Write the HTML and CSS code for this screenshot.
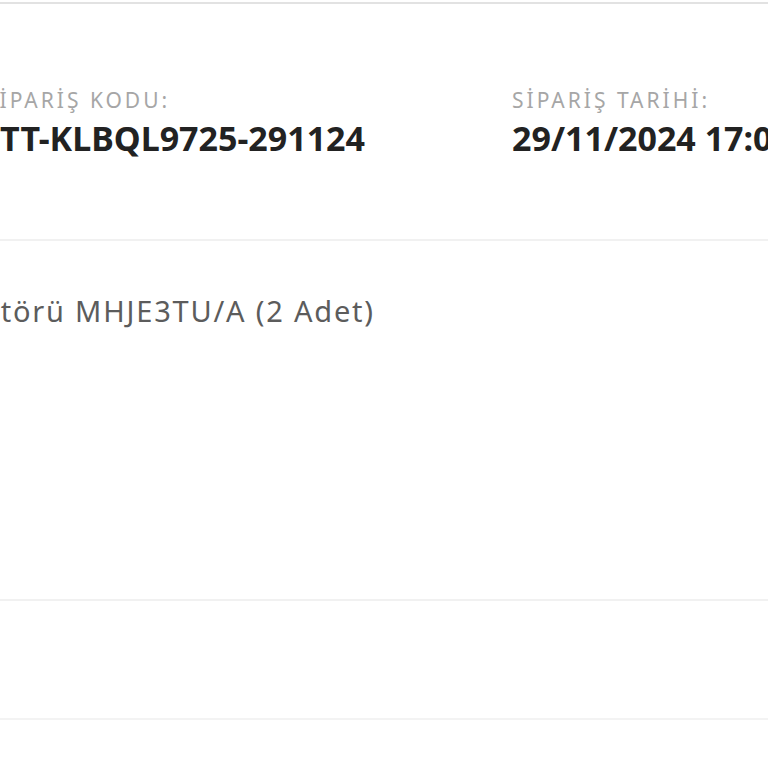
FILE: index.html
```html
<!DOCTYPE html>
<html lang="tr">
<head>
    <meta charset="UTF-8">
    <meta name="viewport" content="width=device-width, initial-scale=1.0">
    <title>Sipariş Detayı</title>
    <link rel="stylesheet" href="styles.css">
</head>
<body>
    <div class="order-card">
        <div class="order-head">
            <div class="info-col">
                <div class="info-label">SİPARİŞ KODU:</div>
                <div class="info-value code">PTT-KLBQL9725-291124</div>
            </div>
            <div class="info-col">
                <div class="info-label">SİPARİŞ TARİHİ:</div>
                <div class="info-value">29/11/2024 17:05</div>
            </div>
        </div>
        <div class="order-items">
            <div class="item-name">Adaptörü MHJE3TU/A (2 Adet)</div>
        </div>
        <div class="order-row"></div>
        <div class="order-row last"></div>
    </div>
</body>
</html>
```

FILE: styles.css
```css
body {
    margin: 0;
    padding: 0;
    background: #ffffff;
    font-family: "Noto Sans", "Open Sans", sans-serif;
    overflow: hidden;
    height: 768px;
}
.order-card {
    margin-top: 2px;
    border-top: 2px solid #e2e2e2;
    overflow: hidden;
}
.order-head {
    display: grid;
    grid-template-columns: 527px 1fr;
    margin-left: -15px;
    height: 237px;
    padding-top: 82px;
    box-sizing: border-box;
    border-bottom: 2px solid #f1f1f1;
}
.info-label {
    font-size: 21px;
    line-height: 28px;
    color: #a6a6a6;
    letter-spacing: 3px;
}
.info-value {
    margin-top: 4px;
    font-size: 34px;
    line-height: 40px;
    font-weight: 700;
    color: #222222;
    white-space: nowrap;
}
.info-value.code {
    text-indent: -6px;
}
.order-items {
    height: 360px;
    padding-top: 52px;
    box-sizing: border-box;
    border-bottom: 2px solid #f1f1f1;
}
.item-name {
    font-size: 29px;
    line-height: 36px;
    color: #5c5c5c;
    letter-spacing: 1.8px;
    text-indent: -77px;
    white-space: nowrap;
}
.order-row {
    height: 117px;
    border-bottom: 2px solid #f3f3f3;
}
.order-row.last {
    height: 48px;
    border-bottom: none;
}
```
